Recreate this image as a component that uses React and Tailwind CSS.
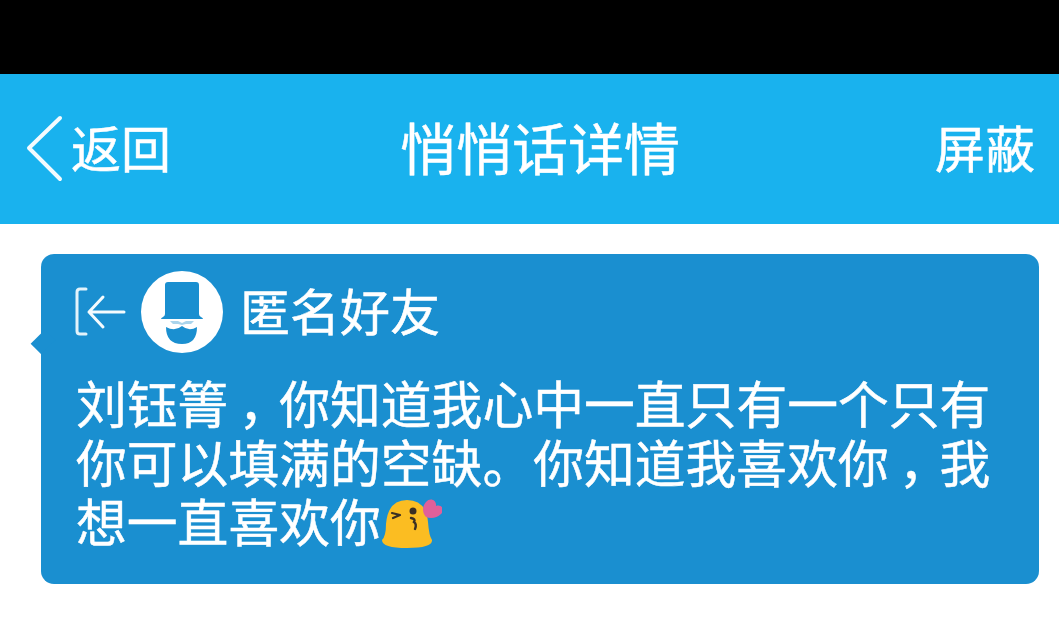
import React from "react";

const cjk = "font-['Noto_Sans_CJK_SC',sans-serif] [-webkit-text-stroke:0.5px_white]";

const BackArrow = () => (
  <svg width="40" height="68" viewBox="0 0 40 68" className="shrink-0">
    <path d="M35 3 L4 33 L35 64" fill="none" stroke="#f4fbfe" strokeWidth="4" strokeLinecap="round" strokeLinejoin="round" />
  </svg>
);

const ExitIcon = () => (
  <svg width="52" height="52" viewBox="0 0 52 52" className="shrink-0">
    <path d="M11 3 H5 Q2 3 2 6 V45 Q2 48 5 48 H11" fill="none" stroke="#e3f3fb" strokeWidth="3" strokeLinecap="round" />
    <path d="M14 26 H49 M28 11 L14 26 L28 41" fill="none" stroke="#f4fbfe" strokeWidth="3" strokeLinecap="round" strokeLinejoin="round" />
  </svg>
);

const HatAvatar = () => (
  <svg width="84" height="84" viewBox="0 0 84 84" className="shrink-0">
    <circle cx="42" cy="42" r="41" fill="white" />
    <path d="M25 15 Q25 12 28 12 H56 Q59 12 59 15 V44 Q59 46 61 47 Q63 48 63 49 H21 Q21 48 23 47 Q25 46 25 44 Z" fill="#1a8fd0" />
    <path d="M30 51 H38 L42 53 L46 51 H54 L51 54 H46 L42 55 L38 54 H33 Z" fill="#a9d4ec" />
    <path d="M26 57 Q35 62 42 56 Q49 62 57 57 Q57 74 42 74 Q26 74 26 57 Z" fill="#1a8fd0" />
  </svg>
);

const KissEmoji = () => (
  <svg width="62" height="52" viewBox="0 0 62 52" className="shrink-0">
    <path d="M2 42 Q6 38 6 26 Q8 2 27 2 Q46 2 48 24 Q49 38 52 42 Q53 50 27 50 Q2 50 2 42 Z" fill="#fbbd22" />
    <path d="M12 15 L20 17 L13 20" fill="none" stroke="#3b3024" strokeWidth="2.2" strokeLinecap="round" strokeLinejoin="round" />
    <circle cx="33" cy="13" r="3.5" fill="#3b3024" />
    <path d="M31 20 Q36 21 34 24 Q37 26 35 31" fill="none" stroke="#3b3024" strokeWidth="2.4" strokeLinecap="round" />
    <path d="M46 4 C50 -1 57 2 56 8 C62 6 65 12 61 16 C57 20 51 21 46 19 C42 15 42 8 46 4 Z" fill="#e0609a" />
  </svg>
);

const Comma = () => <span className="inline-block w-[50.8px] translate-x-[10px]">，</span>;

export default function App() {
  return (
    <div className={`w-[1059px] h-[628px] bg-white overflow-hidden flex flex-col ${cjk}`}>
      <div className="h-[74px] bg-black shrink-0" />
      <div className="h-[150px] bg-[#19b2ee] shrink-0 flex items-center justify-between pl-[25px] pr-[24px] text-white">
        <div className="flex items-center gap-[6px] w-[260px]">
          <BackArrow />
          <span className="text-[50px] leading-none -translate-y-[3px]">返回</span>
        </div>
        <span className="text-[56px] leading-none -translate-y-[3px]">悄悄话详情</span>
        <span className="text-[50px] leading-none w-[240px] text-right -translate-y-[3px]">屏蔽</span>
      </div>
      <div className="pr-[20px] pt-[30px] pl-[41px]">
        <div className="relative w-[998px] h-[330px] bg-[#1a8fd0] rounded-[13px] pl-[34px] pr-[30px] pt-[16px] text-white">
          <div className="absolute left-[-8px] top-[78px] w-[20px] h-[20px] rotate-45 scale-x-75 bg-[#1a8fd0]" />
          <div className="relative flex items-center h-[84px]">
            <ExitIcon />
            <div className="ml-[13px]"><HatAvatar /></div>
            <span className="ml-[16px] text-[50px] leading-none -translate-y-[3px]">匿名好友</span>
          </div>
          <div className="relative ml-[1px] mt-[19px] text-[50.8px] leading-[59px]">
            <span className="block whitespace-nowrap">刘钰箐<Comma />你知道我心中一直只有一个只有</span>
            <span className="block whitespace-nowrap">你可以填满的空缺。你知道我喜欢你<Comma />我</span>
            <span className="flex items-end whitespace-nowrap">想一直喜欢你<span className="-ml-[1px]"><KissEmoji /></span></span>
          </div>
        </div>
      </div>
    </div>
  );
}
